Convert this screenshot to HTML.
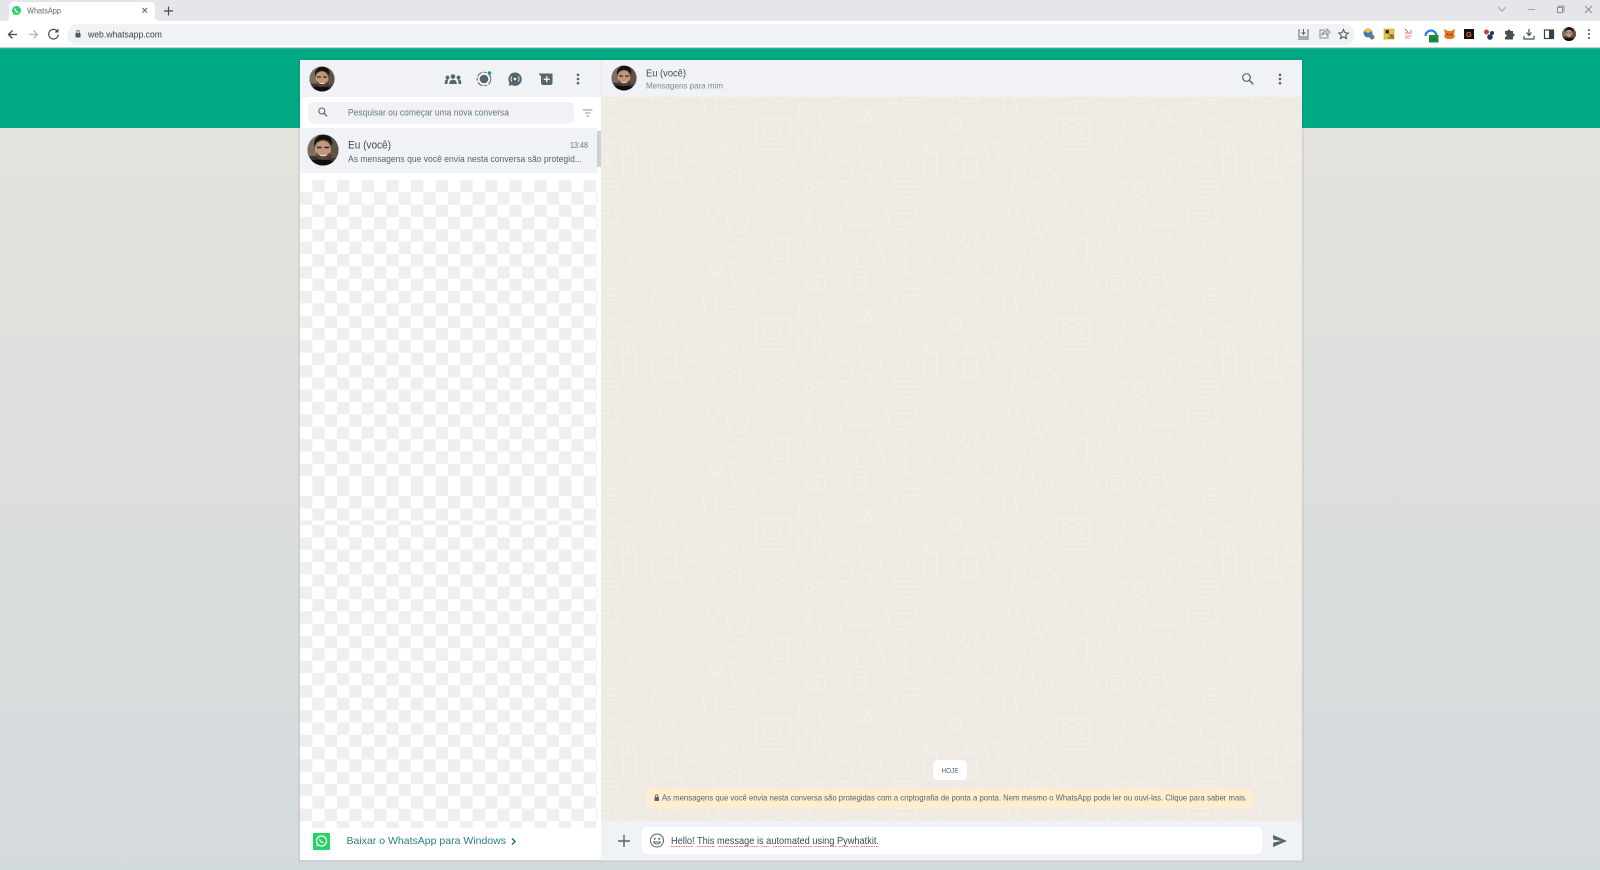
<!DOCTYPE html>
<html lang="pt">
<head>
<meta charset="utf-8">
<title>WhatsApp</title>
<style>
html,body{margin:0;padding:0;width:1600px;height:870px;overflow:hidden;background:#dadedd}
svg{display:block;position:absolute;left:0;top:0;filter:blur(.35px)}
text{font-family:"Liberation Sans",sans-serif}
</style>
</head>
<body>
<svg width="1600" height="870" viewBox="0 0 1600 870" xmlns="http://www.w3.org/2000/svg">
<defs>
<linearGradient id="bg" x1="0" y1="0" x2="0" y2="1">
<stop offset="0" stop-color="#e6e4dc"/><stop offset="0.35" stop-color="#e0e1dd"/><stop offset="1" stop-color="#d3dadd"/>
</linearGradient>
<pattern id="chk" x="300" y="180" width="24.67" height="24.67" patternUnits="userSpaceOnUse">
<rect width="24.67" height="24.67" fill="#fff"/>
<rect x="12.33" width="12.34" height="12.33" fill="#efefef"/>
<rect y="12.33" width="12.33" height="12.34" fill="#efefef"/>
</pattern>
<pattern id="chk2" x="300" y="525" width="24.67" height="24.67" patternUnits="userSpaceOnUse">
<rect width="24.67" height="24.67" fill="#fff"/>
<rect x="12.33" width="12.34" height="12.33" fill="#efefef"/>
<rect y="12.33" width="12.33" height="12.34" fill="#efefef"/>
</pattern>
<pattern id="rowA" x="300" y="0" width="24.67" height="100" patternUnits="userSpaceOnUse">
<rect width="24.67" height="100" fill="#fff"/><rect x="12.33" width="12.34" height="100" fill="#efefef"/>
</pattern>
<pattern id="rowB" x="300" y="0" width="24.67" height="100" patternUnits="userSpaceOnUse">
<rect width="24.67" height="100" fill="#fff"/><rect width="12.33" height="100" fill="#efefef"/>
</pattern>
<pattern id="doodle" x="700" y="200" width="300" height="200" patternUnits="userSpaceOnUse">
<rect width="300" height="200" fill="#efebe4"/>
<g fill="none" stroke="#f4f1eb" stroke-width="1">
<rect x="9" y="3" width="8" height="14" rx="4"/><path d="M6 12c0 6 4 8 7 8s7-2 7-8M13 20v4"/>
<path d="M30 12c5-6 14-5 17 1s1 14-4 18-12 3-14-3 -3-11 1-16z"/><circle cx="42" cy="28" r="5"/>
<circle cx="97" cy="15" r="11"/><circle cx="130" cy="27" r="11"/><path d="M97 15l16-12 17 24M113 3l-6 22"/>
<circle cx="162" cy="10" r="5"/><path d="M150 26c2-8 22-8 26 0z"/>
<rect x="188" y="3" width="28" height="21" rx="2" transform="rotate(-8 202 13)"/><path d="M193 9h18M193 14h18"/>
<path d="M62 40l6-8 6 4M64 22l18-5"/>
<circle cx="32" cy="55" r="8"/><path d="M32 50v5h4"/>
<rect x="73" y="38" width="28" height="25" transform="rotate(-7 87 50)"/><path d="M87 37v26"/>
<path d="M132 55c4-7 18-8 23 0s-1 15-10 15-16-7-13-15z"/><circle cx="146" cy="57" r="4"/>
<path d="M178 42c4-4 7-2 9 2l22 28c4 4 12 8 14 16-9 2-20 0-25-6-4-6-8-8-10-12z"/><circle cx="205" cy="72" r="3"/>
<path d="M205 42l2 7 7 2-7 2-2 7-2-7-7-2 7-2z"/>
<circle cx="267" cy="57" r="9"/><circle cx="267" cy="45" r="2"/><path d="M263 61l3-6 5-3-2 6z"/>
<path d="M248 30c5-7 15-4 16 4s-4 9-8 10c-5-2-11-7-8-14z"/><path d="M280 26l10 3-5 16-10-3z"/>
<rect x="35" y="70" width="17" height="29" rx="3" transform="rotate(-14 43 85)"/><circle cx="44" cy="84" r="4"/>
<path d="M62 84c8-8 14-6 18-3 5-4 13-5 18 2 0 12-8 19-18 19-9 0-17-7-18-18z"/><path d="M64 88c10 4 22 4 32-2"/>
<rect x="106" y="76" width="19" height="14" rx="2"/><circle cx="115" cy="83" r="3.500"/>
<path d="M150 72h15v16c0 2-14 2-15 0zM165 76c5-1 5 7 0 7"/>
<path d="M178 82c1-7 3-9 4-10 2 1 3 3 4 10l2 1h-12z"/>
<path d="M140 72l1.500 5 5 1.500-5 1.500-1.500 5-1.500-5-5-1.500 5-1.500z"/>
<path d="M256 72l2 5 5 2-5 2-2 5-2-5-5-2 5-2z"/>
<path d="M282 62c6-3 12 0 14 4s-2 12-8 13-12-3-12-8 2-7 6-9z"/>
<path d="M15 65l3.500 2 3.500 4-6 7 -6-7c0-3 2-5 5-6z"/><path d="M15 62l2 4 4 1-3 3 1 4-4-2-4 2 1-4-3-3 4-1z"/>
<rect x="4" y="94" width="12" height="20" rx="2" transform="rotate(-8 10 104)"/>
<circle cx="30" cy="102" r="5"/><path d="M22 122c0-7 8-12 14-10 6 1 7 9 2 11-5 2-12 1-16-1z"/>
<path d="M100 102l6 11-5 1-3 3z"/><path d="M172 110l-8 8 7 5 27-20-3-1z" /><path d="M196 95l-5 15"/>
<rect x="204" y="95" width="18" height="13" rx="1" transform="rotate(-8 213 101)"/><path d="M207 100h12M207 104h10"/>
<rect x="253" y="92" width="24" height="16" rx="2" transform="rotate(14 265 100)"/><path d="M255 95l10 8 11-4"/>
<path d="M122 109c8-3 16 0 22 6l10-8c-2 8-6 12-10 16 4 6 8 12 15 20 4 8-3 15-9 18-8 3-16-2-18-8-4-4-12-8-12-16 0-5 6-8 6-11-6-4-8-14-4-17z"/>
<circle cx="127" cy="125" r="3.500"/><circle cx="136" cy="125" r="3.500"/>
<path d="M108 128c5 8 8 14 8 22s-8 8-14 5c-6-3-4-12-2-18 2 2 3 3 5 1z"/><path d="M100 150c-2 4-5 4-4 6"/>
<circle cx="164" cy="118" r="7.500"/><path d="M158 114c4 2 9 2 13 1M157 120c4 2 9 2 14 1"/>
<rect x="56" y="118" width="34" height="26" rx="1"/><circle cx="72" cy="130" r="9"/><circle cx="72" cy="130" r="3"/>
<circle cx="213" cy="131" r="12.500"/><circle cx="213" cy="127" r="3.500"/><path d="M206 138c2-5 12-5 14 0"/>
<path d="M170 135l20-9 1 3-19 11c-2 0-3-3-2-5z"/>
<path d="M253 117l5 3 4-1-2 5 2 4-5 0-4 3-1-5-4-3 5-2z"/>
<path d="M272 122c5-8 13-12 20-14l8 16-24 5z"/><path d="M264 144l4 5-2 5 6-3M280 146l-6 8 4 2"/>
<circle cx="32" cy="148" r="6"/><path d="M36 152l9 10"/><circle cx="20" cy="142" r="3"/><circle cx="24" cy="148" r="2.500"/>
<path d="M46 135l3 4 4 1-3 4 1 4-5-1-4 2 1-5-3-3 5-1z"/>
<path d="M93 160l-2 10 3 1c8 4 14 8 20 10 8 3 18 2 23-2-6-2-12-6-16-14"/><path d="M133 152c-3 6-6 10-4 14"/>
<rect x="163" y="157" width="45" height="15" rx="1" transform="rotate(-10 185 164)"/><path d="M176 165l5-3v6z"/><path d="M190 162h12"/>
<path d="M175 148c-5-4-1-12 5-8 4-3 6 3 4 6l-4 8z"/>
<path d="M222 146l9 8 6-2v27h-13z"/><path d="M227 145h7v8h-7z"/>
<path d="M252 161l12-8 12 2 2 20-14 5-12-3z"/><path d="M264 160v20"/>
<path d="M252 184c4-6 18-9 28-7 4 3 3 8-2 11-8 4-22 4-26-4z"/>
<path d="M285 145l15-4v18l-10 3z"/>
<path d="M80 167l14-5 5 10-12 6z"/><path d="M83 170l7 4"/>
<path d="M192 182c2-8 26-8 28 0zM192 186h28M194 190c8 3 18 3 25 0"/>
<circle cx="143" cy="190" r="8.500"/><circle cx="143" cy="190" r="3"/><path d="M135 184l4-3h7l3 3"/>
<circle cx="35" cy="178" r="5"/><circle cx="28" cy="172" r="4"/><circle cx="43" cy="172" r="4"/><circle cx="28" cy="184" r="4"/><circle cx="43" cy="184" r="4"/>
<path d="M55 175c4-6 10-6 14-2l15 7-10 3-9 4-6-4z"/>
<path d="M8 160c4-2 7 2 7 8s-1 20-5 24"/>
<circle cx="109" cy="188" r="4"/><circle cx="117" cy="192" r="4"/>
<path d="M55 195l3-10 4 10"/>
<g stroke-width=".9">
<circle cx="65" cy="5" r="2"/><circle cx="146" cy="5" r="2"/><circle cx="240" cy="22" r="2"/><circle cx="260" cy="12" r="2"/><circle cx="276" cy="10" r="2"/><circle cx="238" cy="40" r="2"/><circle cx="230" cy="60" r="2"/><circle cx="228" cy="32" r="2"/>
<circle cx="42" cy="40" r="2"/><circle cx="50" cy="48" r="2"/><circle cx="108" cy="38" r="2"/><circle cx="122" cy="60" r="2"/><circle cx="107" cy="50" r="2"/><circle cx="170" cy="35" r="2"/><circle cx="175" cy="62" r="2"/>
<circle cx="68" cy="104" r="2"/><circle cx="76" cy="108" r="2"/><circle cx="84" cy="106" r="2"/><circle cx="92" cy="68" r="2"/><circle cx="135" cy="90" r="2"/><circle cx="143" cy="100" r="2"/><circle cx="150" cy="96" r="2"/><circle cx="135" cy="102" r="2"/>
<circle cx="229" cy="90" r="2"/><circle cx="229" cy="110" r="2"/><circle cx="243" cy="78" r="2"/><circle cx="240" cy="118" r="2"/><circle cx="230" cy="128" r="2"/><circle cx="244" cy="136" r="2"/>
<circle cx="50" cy="170" r="2"/><circle cx="56" cy="150" r="2"/><circle cx="66" cy="160" r="2"/><circle cx="152" cy="172" r="2"/><circle cx="158" cy="186" r="2"/><circle cx="170" cy="180" r="2"/><circle cx="245" cy="170" r="2"/><circle cx="285" cy="192" r="2"/>
</g>
</g>
</pattern>
<clipPath id="av1"><circle cx="322" cy="79" r="12.5"/></clipPath>
<clipPath id="av2"><circle cx="323" cy="150" r="15.5"/></clipPath>
<clipPath id="av3"><circle cx="624" cy="78" r="12.5"/></clipPath>
<clipPath id="av4"><circle cx="1569" cy="34" r="7"/></clipPath>
<g id="face">
<circle r="16" fill="#3d3530"/>
<path d="M-16-16H-5V6H-16z" fill="#7a7060"/>
<path d="M8-16H16V8H8z" fill="#5e5245"/>
<ellipse cx="0" cy="0" rx="8" ry="9.500" fill="#c2967c"/>
<path d="M-8.500-3c-2-9 5-12 9-12s10 2 8.500 11c-1-4-3-6-8-6.500s-8 2-9.500 7.500z" fill="#14110f"/>
<path d="M-6-2.500h4.500M1.500-2.500H6" stroke="#2a2220" stroke-width="1.500"/>
<path d="M-7 2c0 6 3 9 7 9s7-3 7-9c-2 2-3 4-7 4s-5-2-7-4z" fill="#5a4438"/>
<path d="M-4 4c3 2 6 2 8 0c0 3-7 3-8 0z" fill="#fff"/>
<path d="M-16 16c0-5 8-8 15-6c7-1 14 1 16 6z" fill="#0e0e0e"/>
</g>
</defs>

<rect width="1600" height="870" fill="url(#bg)"/>
<rect y="48" width="1600" height="80" fill="#00a884"/>
<rect y="47" width="1600" height="1.2" fill="#b9d3c8"/>

<!-- Browser chrome -->
<rect width="1600" height="21" fill="#e4e6ea"/>
<rect y="21" width="1600" height="26" fill="#fff"/>
<path d="M4 21c3 0 5-1 5-4V7c0-3 2-5 5-5h136c3 0 5 2 5 5v10c0 3 2 4 5 4z" fill="#fff"/>
<circle cx="16.500" cy="10.500" r="4.500" fill="#25d366"/><path d="M13 15l1-3 2 2z" fill="#25d366"/><path d="M15 8.500c0 2 1.500 4 3.500 4" stroke="#fff" stroke-width="1.300" fill="none"/>
<text x="27" y="13.500" font-size="8.500" fill="#5f6368" textLength="34" lengthAdjust="spacingAndGlyphs">WhatsApp</text>
<path d="M142.500 8l4.500 4.500M147 8l-4.500 4.500" stroke="#5f6368" stroke-width="1.100"/>
<path d="M168.500 6.500v9M164 11h9" stroke="#45484c" stroke-width="1.200"/>
<path d="M17 34.500H9m3.500-4L8.500 34.500l4 4" fill="none" stroke="#45484c" stroke-width="1.300"/>
<path d="M29 34.500h8m-3.500-4l4 4-4 4" fill="none" stroke="#b4b6b9" stroke-width="1.300"/>
<path d="M57.500 31.500a4.800 4.800 0 1 0 .8 3" fill="none" stroke="#45484c" stroke-width="1.200"/><path d="M58.500 28.500v4h-4z" fill="#45484c"/>
<rect x="67" y="24" width="1288" height="21" rx="10.500" fill="#f0f2f5"/>
<rect x="75.500" y="33" width="5" height="4.500" rx=".5" fill="#55595e"/><path d="M76.700 33v-1.300a1.300 1.300 0 0 1 2.600 0V33" fill="none" stroke="#55595e" stroke-width=".8"/>
<text x="88" y="37.500" font-size="9.500" fill="#3d4043" textLength="74" lengthAdjust="spacingAndGlyphs">web.whatsapp.com</text>
<!-- Omnibox icons -->
<path d="M1300 30h-1v7h9v-7h-1" fill="none" stroke="#5f6368" stroke-width="1"/><path d="M1303.500 29v5m-2-2l2 2.500 2-2.500M1298 39h11" fill="none" stroke="#5f6368" stroke-width="1"/>
<path d="M1325 30h-5v8h8v-3" fill="none" stroke="#8a8e92" stroke-width="1"/><path d="M1322 35c0-2 2-4 5-4v-2l3 3-3 3v-2c-2 0-4 1-5 2z" fill="none" stroke="#8a8e92" stroke-width="1"/>
<path d="M1343.500 29.500l1.400 3.200 3.400.3-2.600 2.300.8 3.300-3-1.800-3 1.800.8-3.300-2.600-2.300 3.400-.3z" fill="none" stroke="#4d5054" stroke-width="1"/>
<!-- Extensions -->
<circle cx="1368" cy="33" r="4.500" fill="#3c78b4"/><path d="M1364 31c2-3 6-3 8 0l-4 2z" fill="#f0c040"/><circle cx="1372" cy="37" r="2.500" fill="#777"/>
<rect x="1384" y="29" width="10" height="10" fill="#e8c53a" stroke="#bda020" stroke-width=".6"/><rect x="1385.500" y="30" width="3.500" height="3.500" fill="#333"/><text x="1388" y="38.500" font-size="5" font-weight="bold" fill="#333">JS</text>
<path d="M1405 29l3 3m2-1h2" stroke="#666" stroke-width=".8"/><path d="M1405 33h7" stroke="#e66" stroke-width="1"/><path d="M1405 36h7M1405 38h5" stroke="#e88" stroke-width="1"/>
<path d="M1425.500 36a5.500 5.500 0 0 1 11 0" fill="none" stroke="#1a73e8" stroke-width="2"/><rect x="1429" y="35" width="9.500" height="7.500" fill="#1e8e3e"/><text x="1430" y="41" font-size="4.500" fill="#163">RR</text>
<path d="M1444 29l4 2h3l4-2-1 5 1 3-3 2h-5l-3-2 1-3z" fill="#e2761b"/><path d="M1447 34l1.500 1M1452 34l-1.500 1" stroke="#503" stroke-width=".8"/>
<rect x="1464" y="29" width="10" height="10" fill="#111"/><text x="1466" y="37" font-size="7.500" font-weight="bold" fill="#e8701a">G</text>
<circle cx="1486.500" cy="32" r="2.500" fill="#c8402a"/><circle cx="1492" cy="33" r="2" fill="#333"/><circle cx="1490" cy="37" r="2.800" fill="#1a3a70"/>
<path d="M1505 31h2.500a1.500 1.500 0 0 1 3 0h2.500v2.500a1.500 1.500 0 0 1 0 3v3h-8v-2.500a1.500 1.500 0 0 0 0-3z" fill="#4b4f54"/>
<path d="M1529 29v6m-2.500-2.500l2.500 3 2.500-3M1524 36v3h10v-3" fill="none" stroke="#4b4f54" stroke-width="1.200"/>
<rect x="1544.500" y="30" width="9" height="8.500" fill="none" stroke="#3c4043" stroke-width="1.200"/><rect x="1549" y="30" width="4.500" height="8.500" fill="#3c4043"/>
<g clip-path="url(#av4)"><use href="#face" transform="translate(1569 34) scale(.44)"/></g>
<circle cx="1589" cy="30" r="1" fill="#45484c"/><circle cx="1589" cy="34" r="1" fill="#45484c"/><circle cx="1589" cy="38" r="1" fill="#45484c"/>
<!-- Window controls -->
<path d="M1498 7l4 4 4-4" fill="none" stroke="#a0a2a6" stroke-width="1"/>
<path d="M1528 9.500h7" stroke="#a0a2a6" stroke-width="1"/>
<path d="M1557.500 7.500h5v5h-5zM1559 7.500V6h5v5h-1.500" fill="none" stroke="#8b8d91" stroke-width="1"/>
<path d="M1585 6l7 7M1592 6l-7 7" stroke="#8b8d91" stroke-width="1"/>

<!-- App panel -->
<rect x="298" y="58" width="1006" height="804" fill="#000" opacity=".05"/>
<rect x="300" y="60" width="1002" height="800" fill="#fff"/>

<!-- Left pane -->
<rect x="300" y="60" width="301" height="37" fill="#f0f2f5"/>
<g clip-path="url(#av1)"><use href="#face" transform="translate(322 79) scale(.8)"/></g>
<!-- Community -->
<g fill="#54656f"><circle cx="453" cy="76.500" r="2.300"/><circle cx="447.500" cy="77.500" r="1.900"/><circle cx="458.500" cy="77.500" r="1.900"/><path d="M449.200 84c0-3 1.500-4.300 3.800-4.300s3.800 1.300 3.800 4.300zM445 84c-.8-2.600.5-4.700 2.800-4.700l.6.300c-.7 1-1 2.600-1 4.400zM461 84c.8-2.600-.5-4.700-2.800-4.700l-.6.300c.7 1 1 2.600 1 4.400z"/></g>
<!-- Status -->
<circle cx="484" cy="79" r="4.300" fill="#54656f"/><circle cx="484" cy="79" r="6.800" fill="none" stroke="#54656f" stroke-width="1" stroke-dasharray="6 1.500 3 1.500"/><circle cx="489.500" cy="73" r="1.800" fill="#00a884"/>
<!-- Channels -->
<path d="M515 72.500a6.700 6.700 0 1 1-3.300 12.500l-3 .9.800-3a6.700 6.700 0 0 1 5.500-10.400z" fill="#54656f"/><circle cx="515" cy="79" r="1.300" fill="#f0f2f5"/><path d="M511.800 76.500a4 4 0 0 0 0 5M518.200 76.500a4 4 0 0 1 0 5" fill="none" stroke="#f0f2f5" stroke-width="1"/>
<!-- New chat -->
<path d="M540 73.500h12.500v9.500c0 1-1 2-2 2h-7.500c-1 0-2-1-2-2v-6.500l-2.500-3z" fill="#54656f"/><path d="M546.700 76.300v6M543.700 79.300h6" stroke="#f0f2f5" stroke-width="1.400"/>
<!-- Dots -->
<g fill="#54656f"><circle cx="578" cy="74.800" r="1.300"/><circle cx="578" cy="79" r="1.300"/><circle cx="578" cy="83.200" r="1.300"/></g>

<rect x="308" y="102" width="266" height="21.500" rx="5" fill="#f0f2f5"/>
<circle cx="321.800" cy="111" r="3" fill="none" stroke="#54656f" stroke-width="1.100"/><path d="M324 113.300l3 3" stroke="#54656f" stroke-width="1.300"/>
<text x="348" y="115.500" font-size="9.500" fill="#667781" textLength="161" lengthAdjust="spacingAndGlyphs">Pesquisar ou começar uma nova conversa</text>
<path d="M583 110h9.500M585 113h5.500M586.500 116h2.500" stroke="#8696a0" stroke-width="1"/>

<rect x="300" y="128" width="297" height="45" fill="#f0f2f5"/>
<g clip-path="url(#av2)"><use href="#face" transform="translate(323 150)"/></g>
<text x="348" y="148.300" font-size="11" fill="#111b21" opacity=".8" textLength="43" lengthAdjust="spacingAndGlyphs">Eu (você)</text>
<text x="570" y="148" font-size="8" fill="#667781" textLength="18" lengthAdjust="spacingAndGlyphs">13:48</text>
<text x="348" y="162" font-size="9.500" fill="#54656f" textLength="234" lengthAdjust="spacingAndGlyphs">As mensagens que você envia nesta conversa são protegid...</text>
<rect x="597" y="131" width="4" height="36" fill="#cdd0d3"/>

<rect x="300" y="180" width="297" height="296" fill="url(#chk)"/>
<rect x="300" y="476" width="297" height="20" fill="url(#rowA)"/>
<rect x="300" y="496" width="297" height="12.500" fill="url(#rowB)"/>
<rect x="300" y="508.500" width="297" height="12" fill="url(#rowA)"/>
<rect x="300" y="520.500" width="297" height="4.500" fill="url(#rowB)"/>
<rect x="300" y="525" width="297" height="303" fill="url(#chk2)"/>

<!-- Download prompt -->
<rect x="313" y="833" width="17" height="17" rx="1" fill="#25d366"/>
<circle cx="321.500" cy="841" r="5" fill="none" stroke="#fff" stroke-width="1.200"/><path d="M316.300 846.500l1-3 2 2z" fill="#fff"/><path d="M319.700 839c0 2 1.500 3.700 3.700 3.700" stroke="#fff" stroke-width="1.200" fill="none"/>
<text x="346.500" y="844" font-size="10.500" fill="#2a7f7c" textLength="159.500" lengthAdjust="spacingAndGlyphs">Baixar o WhatsApp para Windows</text>
<path d="M512 838.500l3 3-3 3" fill="none" stroke="#1a6f6b" stroke-width="1.400"/>

<!-- Right pane -->
<rect x="601" y="97" width="701" height="724" fill="url(#doodle)"/>
<rect x="601" y="60" width="701" height="37" fill="#f0f2f5"/>
<rect x="601" y="60" width="1" height="37" fill="#e2e4e7"/>
<g clip-path="url(#av3)"><use href="#face" transform="translate(624 78) scale(.8)"/></g>
<text x="646" y="76.300" font-size="10" fill="#111b21" opacity=".8" textLength="40" lengthAdjust="spacingAndGlyphs">Eu (você)</text>
<text x="646" y="88.500" font-size="8.500" fill="#667781" opacity=".85" textLength="77" lengthAdjust="spacingAndGlyphs">Mensagens para mim</text>
<circle cx="1246.500" cy="77.500" r="3.800" fill="none" stroke="#54656f" stroke-width="1.200"/><path d="M1249.500 80.500l3.800 3.800" stroke="#54656f" stroke-width="1.400"/>
<g fill="#54656f"><circle cx="1280" cy="74.800" r="1.300"/><circle cx="1280" cy="79" r="1.300"/><circle cx="1280" cy="83.200" r="1.300"/></g>

<rect x="933" y="760" width="34" height="20" rx="5" fill="#fff"/>
<text x="941.500" y="773" font-size="7.500" fill="#54656f" textLength="17" lengthAdjust="spacingAndGlyphs">HOJE</text>
<rect x="646" y="788" width="607" height="20.500" rx="5" fill="#ffeecd"/>
<rect x="654.500" y="797" width="4.500" height="4" rx=".5" fill="#54656f"/><path d="M655.500 797v-1a1.200 1.200 0 0 1 2.400 0v1" fill="none" stroke="#54656f" stroke-width=".8"/>
<text x="662" y="800.500" font-size="8.500" fill="#54656f" textLength="585" lengthAdjust="spacingAndGlyphs">As mensagens que você envia nesta conversa são protegidas com a criptografia de ponta a ponta. Nem mesmo o WhatsApp pode ler ou ouvi-las. Clique para saber mais.</text>

<rect x="601" y="821" width="701" height="39.500" fill="#f0f2f5"/>
<path d="M624 835v12M618 841h12" stroke="#54656f" stroke-width="1.400"/>
<rect x="642" y="827" width="620" height="27" rx="5" fill="#fff"/>
<circle cx="657" cy="840.500" r="6.500" fill="none" stroke="#54656f" stroke-width="1"/><circle cx="654.700" cy="838.700" r="1" fill="#54656f"/><circle cx="659.300" cy="838.700" r="1" fill="#54656f"/><path d="M653.500 842c1.500 2.700 5.500 2.700 7 0z" fill="none" stroke="#54656f" stroke-width=".9"/>
<text x="671" y="844" font-size="10" fill="#3b4a54" textLength="208" lengthAdjust="spacingAndGlyphs">Hello! This message is automated using Pywhatkit.</text>
<g fill="none" stroke="#e34a4a" stroke-width=".8" stroke-dasharray="1.500 1">
<path d="M671 846.500h22M697 846.500h18M719 846.500h39M761 846.500h8M773 846.500h39M815 846.500h22M839 846.500h10M851 846.500h8M861 846.500h17"/></g>
<path d="M1273 835l14 6-14 6 .3-4.500 8-1.500-8-1.500z" fill="#54656f"/>
</svg>
</body>
</html>
